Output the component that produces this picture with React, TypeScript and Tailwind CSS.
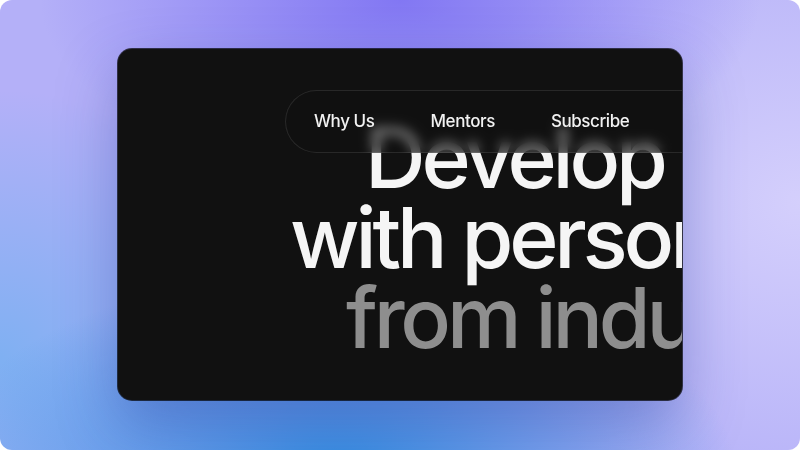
export default function App() {
  const links = ["Why Us", "Mentors", "Subscribe"]

  return (
    <div className="w-[800px] h-[450px] overflow-hidden rounded-[12px] bg-[#b4b0f8] bg-[radial-gradient(ellipse_45%_40%_at_50%_0%,#8277f3_0%,transparent_100%),radial-gradient(ellipse_50%_45%_at_42%_105%,#2f8ce0_0%,transparent_100%),radial-gradient(ellipse_35%_60%_at_0%_80%,#7fb0f2_0%,transparent_100%),radial-gradient(ellipse_45%_70%_at_100%_45%,#d4cffc_0%,transparent_100%)] pt-[49px] pl-[118px]">
      {/* card */}
      <div
        className="relative w-[564px] h-[351px] overflow-hidden rounded-[14px] bg-[#111111] ring-1 ring-black/70 shadow-[0_24px_60px_rgba(30,50,150,0.35)]"
        style={{ fontFamily: "Inter, 'Noto Sans', sans-serif" }}
      >
        {/* heading */}
        <div className="pt-[69px] text-[84px] font-medium leading-[80px] tracking-[-0.05em] whitespace-nowrap">
          <div className="ml-[247px] text-[#f5f5f5]">Develop the</div>
          <div className="ml-[172px] text-[#f5f5f5]">with personalized</div>
          <div className="ml-[228px] text-[#8e8e8e]">from industry</div>
        </div>

        {/* floating nav */}
        <nav className="absolute left-[167px] top-[41px] flex h-[63px] w-[560px] items-center gap-[56px] rounded-full border border-white/10 bg-[#111111]/60 pl-[28px] backdrop-blur-[6px]">
          {links.map((l) => (
            <span key={l} className="text-[17px] font-medium tracking-[-0.025em] text-[#f2f2f2]">
              {l}
            </span>
          ))}
        </nav>
      </div>
    </div>
  )
}
